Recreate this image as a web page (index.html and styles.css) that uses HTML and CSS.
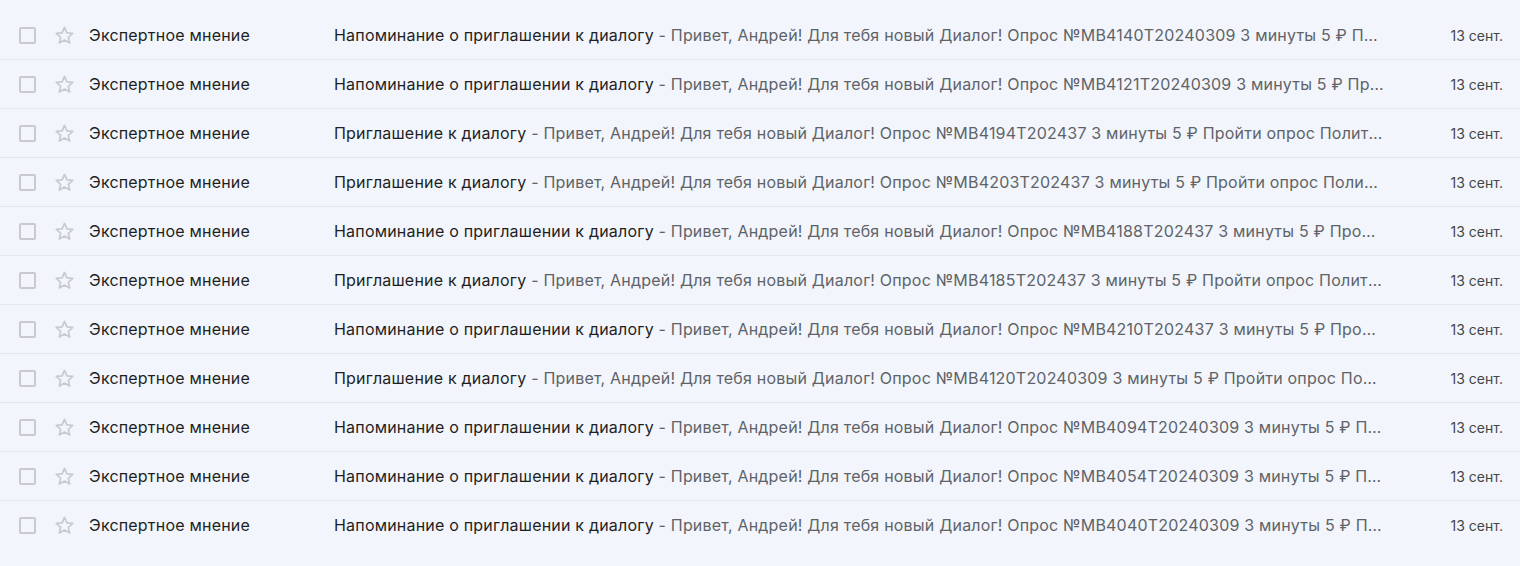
FILE: index.html
```html
<!DOCTYPE html>
<html lang="ru">
<head>
    <meta charset="UTF-8">
    <meta name="viewport" content="width=device-width, initial-scale=1.0">
    <title>Входящие</title>
    <link rel="stylesheet" href="styles.css">
</head>
<body>
    <div class="list">
        <div class="row">
            <span class="check"></span>
            <svg class="star" viewBox="0 0 24 24"><path d="M12 3.6l2.5 5.6 6.1.6-4.6 4.1 1.4 6-5.4-3.2-5.4 3.2 1.4-6-4.6-4.1 6.1-.6z"/></svg>
            <div class="sender">Экспертное мнение</div>
            <div class="text"><span class="subject">Напоминание о приглашении к диалогу</span><span class="snippet"> - Привет, Андрей! Для тебя новый Диалог! Опрос №MB4140T20240309 3 минуты 5 ₽ Пройти опрос Политика конфиденциальности</span></div>
            <div class="date">13 сент.</div>
        </div>
        <div class="row">
            <span class="check"></span>
            <svg class="star" viewBox="0 0 24 24"><path d="M12 3.6l2.5 5.6 6.1.6-4.6 4.1 1.4 6-5.4-3.2-5.4 3.2 1.4-6-4.6-4.1 6.1-.6z"/></svg>
            <div class="sender">Экспертное мнение</div>
            <div class="text"><span class="subject">Напоминание о приглашении к диалогу</span><span class="snippet"> - Привет, Андрей! Для тебя новый Диалог! Опрос №MB4121T20240309 3 минуты 5 ₽ Пройти опрос Политика конфиденциальности</span></div>
            <div class="date">13 сент.</div>
        </div>
        <div class="row">
            <span class="check"></span>
            <svg class="star" viewBox="0 0 24 24"><path d="M12 3.6l2.5 5.6 6.1.6-4.6 4.1 1.4 6-5.4-3.2-5.4 3.2 1.4-6-4.6-4.1 6.1-.6z"/></svg>
            <div class="sender">Экспертное мнение</div>
            <div class="text"><span class="subject">Приглашение к диалогу</span><span class="snippet"> - Привет, Андрей! Для тебя новый Диалог! Опрос №MB4194T202437 3 минуты 5 ₽ Пройти опрос Политика конфиденциальности</span></div>
            <div class="date">13 сент.</div>
        </div>
        <div class="row">
            <span class="check"></span>
            <svg class="star" viewBox="0 0 24 24"><path d="M12 3.6l2.5 5.6 6.1.6-4.6 4.1 1.4 6-5.4-3.2-5.4 3.2 1.4-6-4.6-4.1 6.1-.6z"/></svg>
            <div class="sender">Экспертное мнение</div>
            <div class="text"><span class="subject">Приглашение к диалогу</span><span class="snippet"> - Привет, Андрей! Для тебя новый Диалог! Опрос №MB4203T202437 3 минуты 5 ₽ Пройти опрос Политика конфиденциальности</span></div>
            <div class="date">13 сент.</div>
        </div>
        <div class="row">
            <span class="check"></span>
            <svg class="star" viewBox="0 0 24 24"><path d="M12 3.6l2.5 5.6 6.1.6-4.6 4.1 1.4 6-5.4-3.2-5.4 3.2 1.4-6-4.6-4.1 6.1-.6z"/></svg>
            <div class="sender">Экспертное мнение</div>
            <div class="text"><span class="subject">Напоминание о приглашении к диалогу</span><span class="snippet"> - Привет, Андрей! Для тебя новый Диалог! Опрос №MB4188T202437 3 минуты 5 ₽ Пройти опрос Политика конфиденциальности</span></div>
            <div class="date">13 сент.</div>
        </div>
        <div class="row">
            <span class="check"></span>
            <svg class="star" viewBox="0 0 24 24"><path d="M12 3.6l2.5 5.6 6.1.6-4.6 4.1 1.4 6-5.4-3.2-5.4 3.2 1.4-6-4.6-4.1 6.1-.6z"/></svg>
            <div class="sender">Экспертное мнение</div>
            <div class="text"><span class="subject">Приглашение к диалогу</span><span class="snippet"> - Привет, Андрей! Для тебя новый Диалог! Опрос №MB4185T202437 3 минуты 5 ₽ Пройти опрос Политика конфиденциальности</span></div>
            <div class="date">13 сент.</div>
        </div>
        <div class="row">
            <span class="check"></span>
            <svg class="star" viewBox="0 0 24 24"><path d="M12 3.6l2.5 5.6 6.1.6-4.6 4.1 1.4 6-5.4-3.2-5.4 3.2 1.4-6-4.6-4.1 6.1-.6z"/></svg>
            <div class="sender">Экспертное мнение</div>
            <div class="text"><span class="subject">Напоминание о приглашении к диалогу</span><span class="snippet"> - Привет, Андрей! Для тебя новый Диалог! Опрос №MB4210T202437 3 минуты 5 ₽ Пройти опрос Политика конфиденциальности</span></div>
            <div class="date">13 сент.</div>
        </div>
        <div class="row">
            <span class="check"></span>
            <svg class="star" viewBox="0 0 24 24"><path d="M12 3.6l2.5 5.6 6.1.6-4.6 4.1 1.4 6-5.4-3.2-5.4 3.2 1.4-6-4.6-4.1 6.1-.6z"/></svg>
            <div class="sender">Экспертное мнение</div>
            <div class="text"><span class="subject">Приглашение к диалогу</span><span class="snippet"> - Привет, Андрей! Для тебя новый Диалог! Опрос №MB4120T20240309 3 минуты 5 ₽ Пройти опрос Политика конфиденциальности</span></div>
            <div class="date">13 сент.</div>
        </div>
        <div class="row">
            <span class="check"></span>
            <svg class="star" viewBox="0 0 24 24"><path d="M12 3.6l2.5 5.6 6.1.6-4.6 4.1 1.4 6-5.4-3.2-5.4 3.2 1.4-6-4.6-4.1 6.1-.6z"/></svg>
            <div class="sender">Экспертное мнение</div>
            <div class="text"><span class="subject">Напоминание о приглашении к диалогу</span><span class="snippet"> - Привет, Андрей! Для тебя новый Диалог! Опрос №MB4094T20240309 3 минуты 5 ₽ Пройти опрос Политика конфиденциальности</span></div>
            <div class="date">13 сент.</div>
        </div>
        <div class="row">
            <span class="check"></span>
            <svg class="star" viewBox="0 0 24 24"><path d="M12 3.6l2.5 5.6 6.1.6-4.6 4.1 1.4 6-5.4-3.2-5.4 3.2 1.4-6-4.6-4.1 6.1-.6z"/></svg>
            <div class="sender">Экспертное мнение</div>
            <div class="text"><span class="subject">Напоминание о приглашении к диалогу</span><span class="snippet"> - Привет, Андрей! Для тебя новый Диалог! Опрос №MB4054T20240309 3 минуты 5 ₽ Пройти опрос Политика конфиденциальности</span></div>
            <div class="date">13 сент.</div>
        </div>
        <div class="row">
            <span class="check"></span>
            <svg class="star" viewBox="0 0 24 24"><path d="M12 3.6l2.5 5.6 6.1.6-4.6 4.1 1.4 6-5.4-3.2-5.4 3.2 1.4-6-4.6-4.1 6.1-.6z"/></svg>
            <div class="sender">Экспертное мнение</div>
            <div class="text"><span class="subject">Напоминание о приглашении к диалогу</span><span class="snippet"> - Привет, Андрей! Для тебя новый Диалог! Опрос №MB4040T20240309 3 минуты 5 ₽ Пройти опрос Политика конфиденциальности</span></div>
            <div class="date">13 сент.</div>
        </div>
    </div>
</body>
</html>
```

FILE: styles.css
```css
body {
    font-family: Inter, Roboto, Arial, sans-serif;
    background-color: #f2f6fc;
    color: #1f1f1f;
    margin: 0;
    padding: 0;
}
.list {
    padding-top: 11px;
}
.row {
    display: flex;
    align-items: center;
    height: 48px;
    border-bottom: 1px solid #e3e6ec;
    font-size: 16px;
    letter-spacing: 0.2px;
}
.row:last-child {
    border-bottom: none;
}
.check {
    width: 13px;
    height: 13px;
    border: 2px solid #c8cacf;
    border-radius: 2px;
    margin-left: 19px;
    flex-shrink: 0;
}
.star {
    width: 23px;
    height: 23px;
    margin-left: 17px;
    fill: none;
    stroke: #c8cacf;
    stroke-width: 1.8;
    stroke-linejoin: round;
    flex-shrink: 0;
}
.sender {
    width: 245px;
    margin-left: 13px;
    flex-shrink: 0;
    white-space: nowrap;
}
.text {
    flex: 1;
    min-width: 0;
    margin-right: 14px;
    white-space: nowrap;
    overflow: hidden;
    text-overflow: ellipsis;
    color: #5f6368;
}
.subject {
    color: #1f1f1f;
}
.date {
    width: 104px;
    text-align: right;
    padding-right: 17px;
    font-size: 14px;
    letter-spacing: 0;
    color: #444746;
    flex-shrink: 0;
}
```
